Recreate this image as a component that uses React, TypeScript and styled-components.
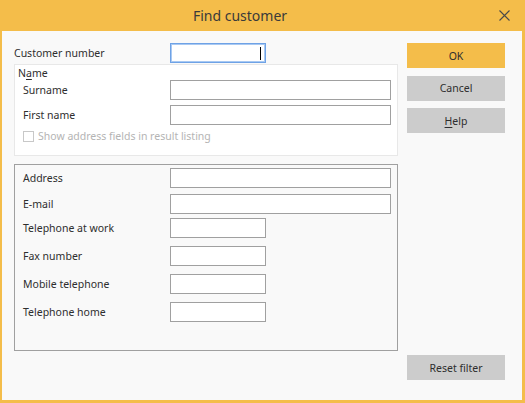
import React from "react";
import styled, { createGlobalStyle } from "styled-components";

const GlobalStyle = createGlobalStyle`
  html, body { margin: 0; padding: 0; background: #ffffff; }
  body { font-family: "Noto Sans", "Liberation Sans", sans-serif; font-size: 10.5px; color: #2e2e2e; }
  * { box-sizing: border-box; }
`;

const Window = styled.div`
  width: 525px;
  height: 403px;
  background: #f4bd4a;
  padding: 0 3px 3px 2px;
  display: flex;
  flex-direction: column;
`;

const TitleBar = styled.div`
  height: 31px;
  display: flex;
  align-items: center;
`;

const Title = styled.div`
  flex: 1;
  text-align: center;
  font-size: 14px;
  color: #3a3a3a;
  line-height: 31px;
  padding-right: 8px;
`;

const CloseButton = styled.button`
  width: 36px;
  height: 31px;
  border: none;
  background: transparent;
  padding: 0;
  display: flex;
  align-items: center;
  justify-content: center;
`;

const Body = styled.div`
  flex: 1;
  background: #f9f9f9;
  display: flex;
  gap: 9px;
  padding: 12px 17px 20px 12px;
`;

const LeftColumn = styled.div`
  width: 384px;
  display: flex;
  flex-direction: column;
`;

const RightColumn = styled.div`
  width: 98px;
  display: flex;
  flex-direction: column;
  gap: 7.5px;
`;

const Button = styled.button<{ $primary?: boolean; $bottom?: boolean }>`
  width: 98px;
  height: 25px;
  border: none;
  padding: 0;
  background: ${(p) => (p.$primary ? "#f4bd4a" : "#cccccc")};
  color: #2e2e2e;
  font-family: inherit;
  font-size: 10.5px;
  margin-top: ${(p) => (p.$bottom ? "auto" : "0")};
`;

const TopRow = styled.div`
  height: 20px;
  display: grid;
  grid-template-columns: 156px auto;
  align-items: center;
`;

const Label = styled.label`
  line-height: 14px;
  white-space: nowrap;
`;

const FieldWrap = styled.div`
  position: relative;
  width: 96px;
  height: 20px;
`;

const Caret = styled.span`
  position: absolute;
  right: 5px;
  top: 4px;
  width: 1px;
  height: 13px;
  background: #000000;
`;

const Input = styled.input<{ $wide?: boolean; $focused?: boolean }>`
  display: block;
  width: ${(p) => (p.$wide ? "221px" : "96px")};
  height: 20px;
  margin: 0;
  padding: 0 4px;
  background: #ffffff;
  border: 1px solid ${(p) => (p.$focused ? "#6ea2e6" : "#a0a0a0")};
  box-shadow: ${(p) => (p.$focused ? "inset 0 0 0 1px #a9c9f2" : "none")};
  border-radius: 0;
  font-family: inherit;
  font-size: 10.5px;
  outline: none;
`;

const NameGroup = styled.fieldset`
  margin: 1px 0 0 0;
  padding: 0 6px 0 8px;
  height: 92px;
  border: 1px solid #e8e8e8;
  background: #ffffff;
  display: flex;
  flex-direction: column;
`;

const Legend = styled.div`
  margin: 1px 0 0 -5px;
  line-height: 14px;
  height: 14px;
`;

const AddressGroup = styled.fieldset`
  margin: 8px 0 0 0;
  padding: 3px 6px 0 8px;
  height: 187px;
  border: 1px solid #a0a0a0;
  background: #f9f9f9;
  display: flex;
  flex-direction: column;
`;

const Row = styled.div<{ $gap?: number }>`
  display: grid;
  grid-template-columns: 147px auto;
  align-items: center;
  height: 20px;
  margin-top: ${(p) => p.$gap ?? 0}px;
`;

const CheckRow = styled.div`
  display: flex;
  align-items: center;
  gap: 4px;
  height: 14px;
  margin-top: 4px;
  color: #b4b4b4;
`;

const CheckBox = styled.span`
  width: 11px;
  height: 11px;
  border: 1px solid #c8c8c8;
  background: #ffffff;
`;

const U = styled.span`
  text-decoration: underline;
  text-underline-offset: 2px;
`;

const addressRows: { label: string; wide: boolean; gap: number }[] = [
  { label: "Address", wide: true, gap: 0 },
  { label: "E-mail", wide: true, gap: 6 },
  { label: "Telephone at work", wide: false, gap: 4 },
  { label: "Fax number", wide: false, gap: 8 },
  { label: "Mobile telephone", wide: false, gap: 8 },
  { label: "Telephone home", wide: false, gap: 8 },
];

export default function App() {
  return (
    <>
      <GlobalStyle />
      <Window>
        <TitleBar>
          <Title>Find customer</Title>
          <CloseButton aria-label="Close">
            <svg width="11" height="11" viewBox="0 0 11 11">
              <path d="M0.5 0.5 L10.5 10.5 M10.5 0.5 L0.5 10.5" stroke="#4a4a4a" strokeWidth="1.1" fill="none" />
            </svg>
          </CloseButton>
        </TitleBar>
        <Body>
          <LeftColumn>
            <TopRow>
              <Label>Customer number</Label>
              <FieldWrap>
                <Input $focused />
                <Caret />
              </FieldWrap>
            </TopRow>
            <NameGroup>
              <Legend>
                N<U>a</U>me
              </Legend>
              <Row>
                <Label>Surname</Label>
                <Input $wide />
              </Row>
              <Row $gap={5}>
                <Label>First name</Label>
                <Input $wide />
              </Row>
              <CheckRow>
                <CheckBox />
                <span>Show address fields in result listing</span>
              </CheckRow>
            </NameGroup>
            <AddressGroup>
              {addressRows.map((r) => (
                <Row key={r.label} $gap={r.gap}>
                  <Label>{r.label}</Label>
                  <Input $wide={r.wide} />
                </Row>
              ))}
            </AddressGroup>
          </LeftColumn>
          <RightColumn>
            <Button $primary>OK</Button>
            <Button>Cancel</Button>
            <Button>
              <U>H</U>elp
            </Button>
            <Button $bottom>Reset filter</Button>
          </RightColumn>
        </Body>
      </Window>
    </>
  );
}
